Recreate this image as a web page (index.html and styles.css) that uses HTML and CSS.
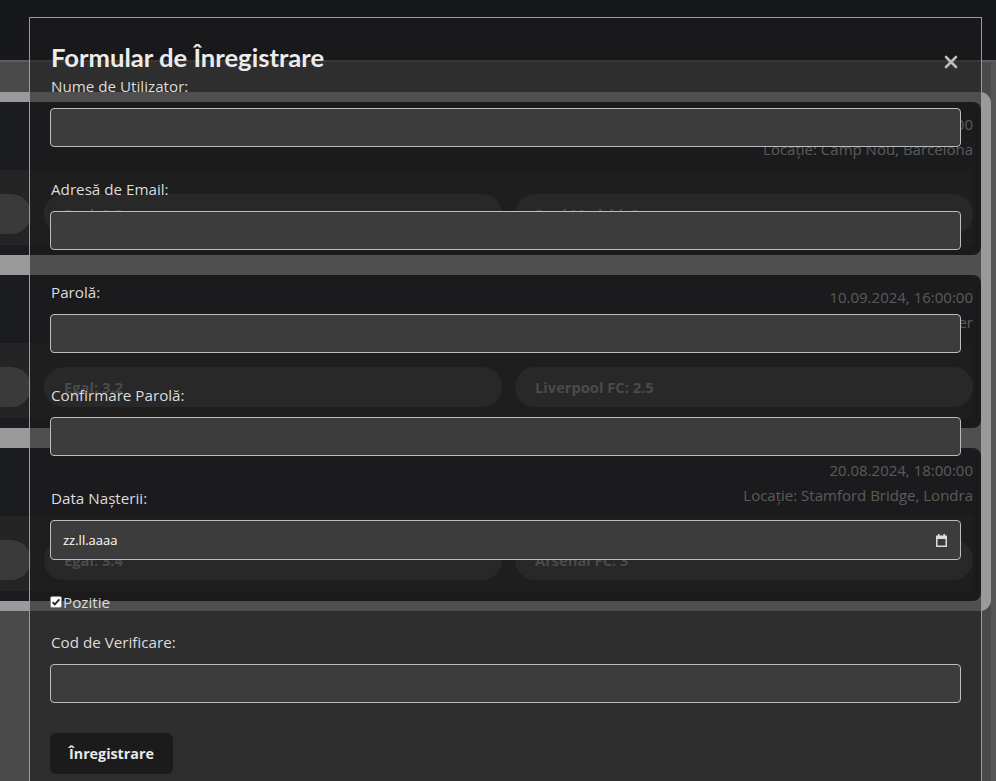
FILE: index.html
```html
<!DOCTYPE html>
<html lang="ro">
<head>
<meta charset="utf-8">
<title>Formular de Înregistrare</title>
<link rel="stylesheet" href="styles.css">
</head>
<body>
<header class="topbar"></header>
<main class="main">
  <section class="matches">
    <article class="match">
      <div class="match-head">
        <div class="teams">FC Barcelona vs Real Madrid</div>
        <div class="meta">
          <div class="date">15.09.2024, 21:00:00</div>
          <div class="loc">Locație: Camp Nou, Barcelona</div>
        </div>
      </div>
      <div class="odds">
        <div class="pill">FC Barcelona: 2.1</div>
        <div class="pill">Egal: 3.3</div>
        <div class="pill">Real Madrid: 3</div>
      </div>
    </article>
    <article class="match">
      <div class="match-head">
        <div class="teams">Manchester United vs Liverpool FC</div>
        <div class="meta">
          <div class="date">10.09.2024, 16:00:00</div>
          <div class="loc">Locație: Old Trafford, Manchester</div>
        </div>
      </div>
      <div class="odds">
        <div class="pill">Manchester United: 2.8</div>
        <div class="pill">Egal: 3.2</div>
        <div class="pill">Liverpool FC: 2.5</div>
      </div>
    </article>
    <article class="match">
      <div class="match-head">
        <div class="teams">Chelsea FC vs Arsenal FC</div>
        <div class="meta">
          <div class="date">20.08.2024, 18:00:00</div>
          <div class="loc">Locație: Stamford Bridge, Londra</div>
        </div>
      </div>
      <div class="odds">
        <div class="pill">Chelsea FC: 2.4</div>
        <div class="pill">Egal: 3.4</div>
        <div class="pill">Arsenal FC: 3</div>
      </div>
    </article>
  </section>
</main>

<div class="modal">
  <div class="modal-head">
    <h2 class="modal-title">Formular de Înregistrare</h2>
    <button class="close" type="button" aria-label="Închide">
      <svg width="14" height="14" viewBox="0 0 14 14"><path d="M2 2L12 12M12 2L2 12" stroke="#bdbdbd" stroke-width="2.6" stroke-linecap="round"/></svg>
    </button>
  </div>
  <form class="form">
    <div class="field">
      <label class="label">Nume de Utilizator:</label>
      <input class="input" type="text">
    </div>
    <div class="field">
      <label class="label">Adresă de Email:</label>
      <input class="input" type="text">
    </div>
    <div class="field">
      <label class="label">Parolă:</label>
      <input class="input" type="password">
    </div>
    <div class="field">
      <label class="label">Confirmare Parolă:</label>
      <input class="input" type="password">
    </div>
    <div class="field">
      <label class="label">Data Nașterii:</label>
      <div class="date-input">
        <span class="date-text">zz.ll.aaaa</span>
        <svg class="cal" width="11" height="13" viewBox="0 0 11 13"><rect x="2" y="0" width="1.6" height="3" fill="#dcdcdc"/><rect x="7.4" y="0" width="1.6" height="3" fill="#dcdcdc"/><rect x="0.75" y="2.25" width="9.5" height="10" fill="none" stroke="#dcdcdc" stroke-width="1.5"/><rect x="0" y="2" width="11" height="3" fill="#dcdcdc"/></svg>
      </div>
    </div>
    <div class="check-row">
      <span class="checkbox"><svg width="12" height="12" viewBox="0 0 12 12"><rect x="0.5" y="0.5" width="11" height="11" rx="1.5" fill="#fff" stroke="#8a8a8a"/><path d="M2.6 6.1l2.2 2.3 4.6-5" fill="none" stroke="#1e1e1e" stroke-width="1.7"/></svg></span>
      <span class="check-label">Pozitie</span>
    </div>
    <div class="field field-last">
      <label class="label">Cod de Verificare:</label>
      <input class="input" type="text">
    </div>
    <button class="submit" type="button">Înregistrare</button>
  </form>
</div>
</body>
</html>
```

FILE: styles.css
```css
* { box-sizing: border-box; }

html, body {
  margin: 0;
  height: 100%;
}

body {
  position: relative;
  overflow: hidden;
  background: #4a4a4a;
  font-family: "Open Sans", "Noto Sans", sans-serif;
}

.topbar {
  height: 62px;
  background: #17181c;
  border-bottom: 2px solid #5e5e5e;
}

.main {
  min-height: calc(100vh - 62px);
  padding: 30px 0 200px;
  background: #4a4a4a;
  border-right: 5px solid #565656;
}

.matches {
  width: 1436px;
  margin-left: -445px;
  padding: 10px;
  display: flex;
  flex-direction: column;
  gap: 20px;
  background: #9a9a9a;
  border-radius: 11px;
}

.match {
  height: 153px;
  padding: 10px 8px;
  background: #1b1c20;
  border-radius: 8px;
}

.match-head {
  display: flex;
  justify-content: space-between;
}

.teams {
  color: #d0d0d0;
  font-size: 18px;
  font-weight: 700;
  line-height: 50px;
}

.meta {
  text-align: right;
  color: #b4b4b4;
  font-size: 15px;
  line-height: 25px;
}

.odds {
  margin-top: 8px;
  padding: 24px 0 11px;
  display: flex;
  gap: 13px;
  background: #242424;
}

.pill {
  flex: 1;
  height: 40px;
  padding-left: 20px;
  border-radius: 20px;
  background: #3a3a3a;
  color: #8e8e8e;
  font-size: 14.7px;
  font-weight: 700;
  line-height: 40px;
}

/* modal */
.modal {
  position: absolute;
  left: 29px;
  top: 17px;
  width: 953px;
  padding: 20px;
  background: rgba(28, 28, 28, 0.59);
  border: 1px solid #9a9a9a;
  color: #dcdcdc;
}

.modal-head {
  height: 38px;
  display: flex;
  justify-content: space-between;
  align-items: flex-start;
}

.modal-title {
  margin: 0 0 0 1px;
  font-family: Lato, "Open Sans", sans-serif;
  font-size: 25.6px;
  font-weight: 700;
  line-height: 38px;
  color: #ececec;
}

.close {
  width: 14px;
  height: 14px;
  margin: 17px 3px 0 0;
  padding: 0;
  border: 0;
  background: none;
  display: flex;
}

.label {
  display: block;
  margin: 0 0 12px 1px;
  font-size: 15.2px;
  line-height: 20px;
}

.input {
  display: block;
  width: 100%;
  height: 39px;
  margin: 0 0 32px;
  background: #3c3c3c;
  border: 1px solid #bdbdbd;
  border-radius: 4px;
  color: #fff;
}

.field-last .input {
  margin-bottom: 30px;
}

.date-input {
  height: 40px;
  margin-bottom: 32px;
  padding: 0 13px 0 12px;
  display: flex;
  align-items: center;
  justify-content: space-between;
  background: #3c3c3c;
  border: 1px solid #bdbdbd;
  border-radius: 4px;
  color: #fff;
  font-size: 13px;
}

.cal { display: block; }

.check-row {
  height: 20px;
  margin-bottom: 20px;
  display: flex;
  align-items: center;
  font-size: 15.2px;
}

.checkbox {
  width: 12px;
  height: 12px;
  margin-right: 1px;
  display: flex;
}

.submit {
  display: block;
  height: 41px;
  padding: 0 19px;
  background: #1b1b1b;
  border: 0;
  border-radius: 6px;
  color: #e8e8e8;
  font-family: inherit;
  font-size: 14.3px;
  font-weight: 700;
}
```
